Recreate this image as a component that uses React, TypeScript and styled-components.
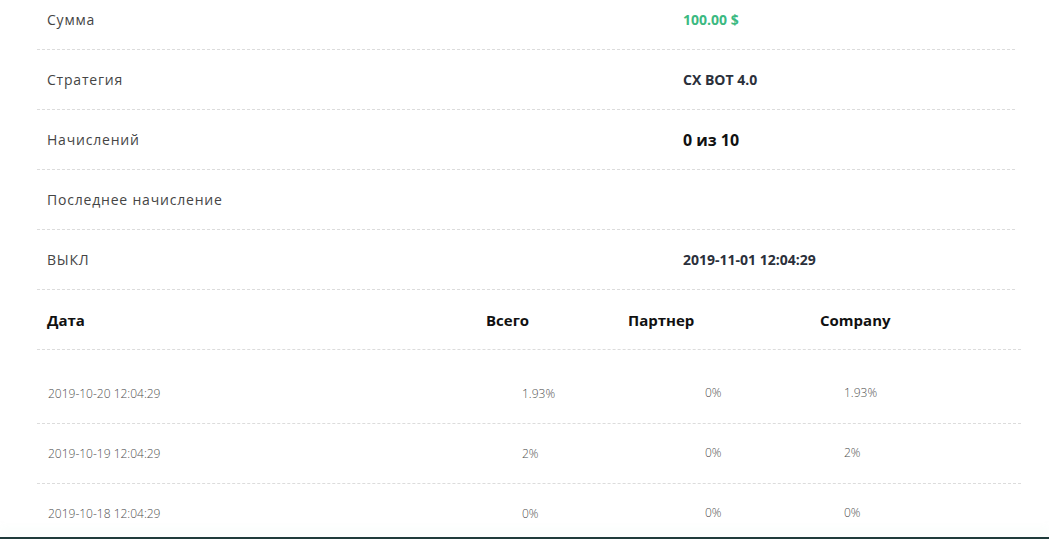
import styled, { createGlobalStyle } from "styled-components";

const GlobalStyle = createGlobalStyle`
  html, body {
    margin: 0;
    padding: 0;
    background: #fff;
    overflow: hidden;
  }
  body {
    font-family: "Open Sans", "Liberation Sans", sans-serif;
  }
`;

const Page = styled.div`
  margin-top: -10px;
  padding-left: 37px;
`;

const InfoList = styled.div`
  width: 978px;
`;

const InfoRow = styled.div`
  display: grid;
  grid-template-columns: 636px 1fr;
  align-items: center;
  height: 59px;
  padding-left: 10px;
  border-bottom: 1px dashed #dcdcdc;
`;

const Label = styled.span`
  font-size: 14px;
  color: #454545;
  letter-spacing: 0.8px;
`;

const Value = styled.span<{ $tone?: "green" | "dark" | "black"; $big?: boolean }>`
  font-size: ${({ $big }) => ($big ? "16px" : "14px")};
  font-weight: 700;
  letter-spacing: 0;
  color: ${({ $tone }) =>
    $tone === "green" ? "#3bb981" : $tone === "black" ? "#111" : "#2b303b"};
`;

const Table = styled.div`
  width: 984px;
`;

const HeadRow = styled.div`
  display: grid;
  grid-template-columns: 439px 142px 192px 1fr;
  align-items: center;
  height: 59px;
  padding-left: 10px;
  border-bottom: 1px dashed #dcdcdc;
  margin-bottom: 14px;
`;

const HeadCell = styled.span`
  font-size: 15px;
  font-weight: 700;
  color: #111;
`;

const DataRow = styled.div`
  display: grid;
  grid-template-columns: 474px 183px 139px 1fr;
  align-items: center;
  height: 59px;
  padding-left: 11px;
  border-bottom: 1px dashed #dcdcdc;
`;

const DataCell = styled.span<{ $lift?: boolean }>`
  font-size: 12px;
  font-weight: 300;
  color: #505050;
  letter-spacing: 0;
  position: relative;
  top: ${({ $lift }) => ($lift ? "-1px" : "0")};
`;

const BottomBar = styled.div`
  position: fixed;
  left: 0;
  right: 0;
  bottom: 0;
  height: 2px;
  background: #1f3b3b;
  box-shadow: 0 -6px 8px rgba(220, 245, 232, 0.5);
`;

const info = [
  { label: "Сумма", value: "100.00 $", tone: "green" as const },
  { label: "Стратегия", value: "CX BOT 4.0", tone: "dark" as const },
  { label: "Начислений", value: "0 из 10", tone: "black" as const, big: true },
  { label: "Последнее начисление", value: "" },
  { label: "ВЫКЛ", value: "2019-11-01 12:04:29", tone: "dark" as const },
];

const rows = [
  { date: "2019-10-20 12:04:29", total: "1.93%", partner: "0%", company: "1.93%" },
  { date: "2019-10-19 12:04:29", total: "2%", partner: "0%", company: "2%" },
  { date: "2019-10-18 12:04:29", total: "0%", partner: "0%", company: "0%" },
];

export default function App() {
  return (
    <>
      <GlobalStyle />
      <Page>
        <InfoList>
          {info.map((item) => (
            <InfoRow key={item.label}>
              <Label>{item.label}</Label>
              <Value $tone={item.tone} $big={item.big}>
                {item.value}
              </Value>
            </InfoRow>
          ))}
        </InfoList>
        <Table>
          <HeadRow>
            <HeadCell>Дата</HeadCell>
            <HeadCell>Всего</HeadCell>
            <HeadCell>Партнер</HeadCell>
            <HeadCell>Company</HeadCell>
          </HeadRow>
          {rows.map((r) => (
            <DataRow key={r.date}>
              <DataCell>{r.date}</DataCell>
              <DataCell>{r.total}</DataCell>
              <DataCell $lift>{r.partner}</DataCell>
              <DataCell $lift>{r.company}</DataCell>
            </DataRow>
          ))}
        </Table>
      </Page>
      <BottomBar />
    </>
  );
}
